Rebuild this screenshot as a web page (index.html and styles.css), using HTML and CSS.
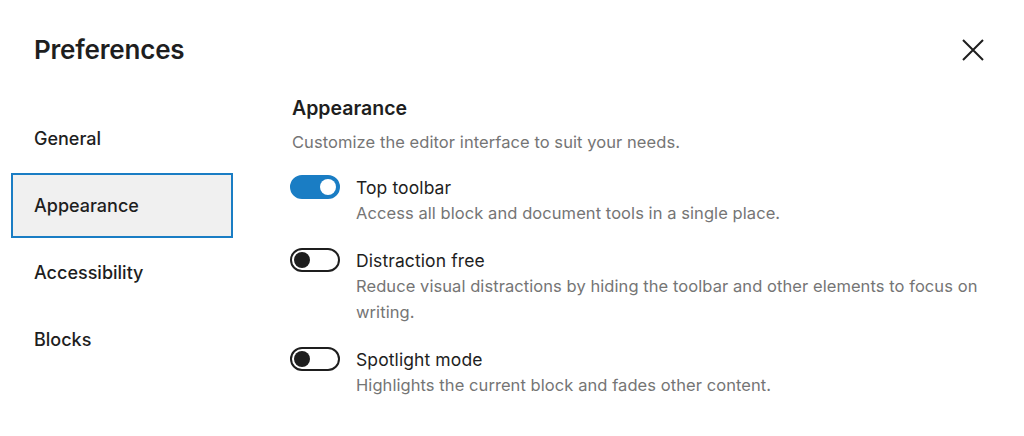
FILE: index.html
```html
<!DOCTYPE html>
<html lang="en">
<head>
    <meta charset="UTF-8">
    <title>Preferences</title>
    <link rel="stylesheet" href="styles.css">
</head>
<body>
    <div class="modal">
        <div class="modal-header">
            <h1>Preferences</h1>
            <button class="close" aria-label="Close">
                <svg width="24" height="24" viewBox="0 0 24 24"><path d="M2 2 L22 22 M22 2 L2 22" stroke="#1e1e1e" stroke-width="2" fill="none"/></svg>
            </button>
        </div>
        <div class="modal-body">
            <nav class="tabs">
                <a class="tab" href="#">General</a>
                <a class="tab active" href="#">Appearance</a>
                <a class="tab" href="#">Accessibility</a>
                <a class="tab" href="#">Blocks</a>
            </nav>
            <section class="panel">
                <h2>Appearance</h2>
                <p class="intro">Customize the editor interface to suit your needs.</p>
                <div class="option">
                    <span class="toggle on"><span class="knob"></span></span>
                    <div class="option-text">
                        <div class="option-label">Top toolbar</div>
                        <div class="option-help">Access all block and document tools in a single place.</div>
                    </div>
                </div>
                <div class="option">
                    <span class="toggle"><span class="knob"></span></span>
                    <div class="option-text">
                        <div class="option-label">Distraction free</div>
                        <div class="option-help">Reduce visual distractions by hiding the toolbar and other elements to focus on writing.</div>
                    </div>
                </div>
                <div class="option">
                    <span class="toggle"><span class="knob"></span></span>
                    <div class="option-text">
                        <div class="option-label">Spotlight mode</div>
                        <div class="option-help">Highlights the current block and fades other content.</div>
                    </div>
                </div>
            </section>
        </div>
    </div>
</body>
</html>
```

FILE: styles.css
```css
* {
    box-sizing: border-box;
    margin: 0;
    padding: 0;
}
body {
    font-family: Inter, 'Noto Sans', sans-serif;
    background-color: #ffffff;
    color: #1e1e1e;
    width: 1024px;
    height: 436px;
    overflow: hidden;
}
.modal-header {
    display: flex;
    justify-content: space-between;
    align-items: center;
    height: 98px;
    padding: 0 39px 0 34px;
}
h1 {
    font-size: 26px;
    font-weight: 600;
    letter-spacing: -0.2px;
}
.close {
    background: none;
    border: none;
    width: 24px;
    height: 24px;
    cursor: pointer;
    margin-top: 2px;
}
.modal-body {
    display: flex;
    margin-top: -2px;
}
.tabs {
    width: 222px;
    margin-left: 11px;
    padding-top: 10px;
    display: flex;
    flex-direction: column;
    gap: 2px;
}
.tab {
    display: flex;
    align-items: center;
    height: 65px;
    padding-left: 21px;
    color: #1e1e1e;
    text-decoration: none;
    font-size: 18px;
    font-weight: 500;
    border: 2px solid transparent;
}
.tab.active {
    background-color: #f0f0f0;
    border-color: #1a7dc4;
}
.panel {
    margin-left: 59px;
    flex: 1;
    padding-right: 30px;
}
h2 {
    font-size: 19.5px;
    font-weight: 600;
    line-height: 25px;
}
.intro {
    font-size: 16.5px;
    letter-spacing: 0.07px;
    line-height: 26px;
    color: #757575;
    margin-top: 8px;
    margin-bottom: 20px;
}
.option {
    display: flex;
    align-items: flex-start;
    gap: 16px;
    margin-bottom: 22px;
}
.toggle {
    flex: none;
    width: 50px;
    height: 24px;
    margin-left: -2px;
    border: 2px solid #1e1e1e;
    border-radius: 12px;
    position: relative;
    background: #fff;
}
.toggle .knob {
    position: absolute;
    top: 2px;
    left: 2px;
    width: 16px;
    height: 16px;
    border-radius: 50%;
    background: #1e1e1e;
}
.toggle.on {
    background: #1a7dc4;
    border-color: #1a7dc4;
}
.toggle.on .knob {
    left: 28px;
    background: #ffffff;
}
.option-label {
    font-size: 17.5px;
    letter-spacing: 0.1px;
    line-height: 25px;
}
.option-help {
    font-size: 16.5px;
    letter-spacing: 0.07px;
    line-height: 26px;
    color: #757575;
}
```
